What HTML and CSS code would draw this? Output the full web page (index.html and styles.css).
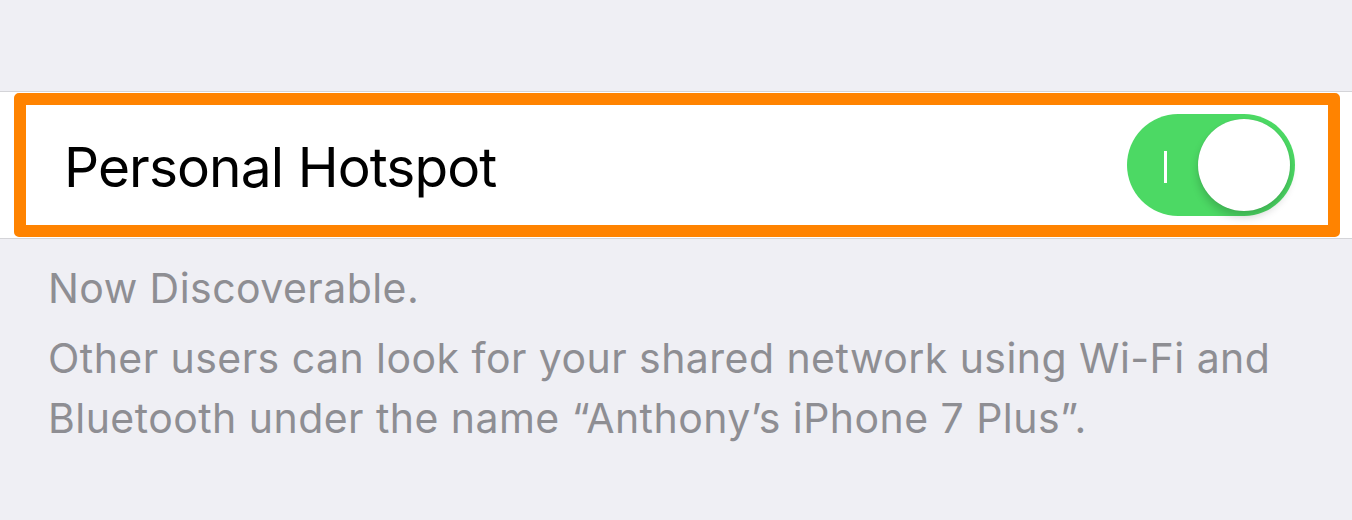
FILE: index.html
```html
<!DOCTYPE html>
<html>
<head>
<meta charset="utf-8">
<link rel="stylesheet" href="styles.css">
</head>
<body>
<div class="page">
  <div class="cell">
    <div class="frame">
      <span class="label">Personal Hotspot</span>
      <div class="toggle">
        <span class="on-mark"></span>
        <span class="knob"></span>
      </div>
    </div>
  </div>
  <div class="footer">
    <p class="line first">Now Discoverable.</p>
    <p class="line">Other users can look for your shared network using Wi-Fi and<br>Bluetooth under the name “Anthony’s iPhone 7 Plus”.</p>
  </div>
</div>
</body>
</html>
```
FILE: styles.css
```css
html, body {
  margin: 0;
  padding: 0;
  background: #efeff4;
}
.page {
  width: 1352px;
  height: 520px;
  padding-top: 91px;
  box-sizing: border-box;
  font-family: Inter, Roboto, "Liberation Sans", sans-serif;
}
.cell {
  background: #fff;
  border-top: 1px solid #d4d4d8;
  border-bottom: 1px solid #d4d4d8;
  padding: 1px 12px 1px 14px;
}
.frame {
  height: 120px;
  border: 12px solid #ff8300;
  border-radius: 5px;
  display: flex;
  align-items: center;
  justify-content: space-between;
  padding: 0 33px 0 38px;
}
.label {
  font-size: 55px;
  letter-spacing: -0.9px;
  color: #000;
  position: relative;
  top: 2px;
}
.toggle {
  width: 168px;
  height: 102px;
  border-radius: 51px;
  background: #4cd964;
  position: relative;
}
.on-mark {
  position: absolute;
  left: 37px;
  top: 37px;
  width: 3px;
  height: 32px;
  background: #fff;
}
.knob {
  position: absolute;
  right: 5px;
  top: 5px;
  width: 92px;
  height: 92px;
  border-radius: 50%;
  background: #fff;
  box-shadow: 0 6px 8px rgba(0,0,0,0.18), 0 0 1px rgba(0,0,0,0.15);
}
.footer {
  padding: 0 0 0 48px;
  color: #8e8e93;
  font-size: 41px;
  letter-spacing: 0.45px;
}
.line {
  margin: 0;
  line-height: 60px;
}
.first {
  margin-top: 19px;
  margin-bottom: 10px;
}
```
